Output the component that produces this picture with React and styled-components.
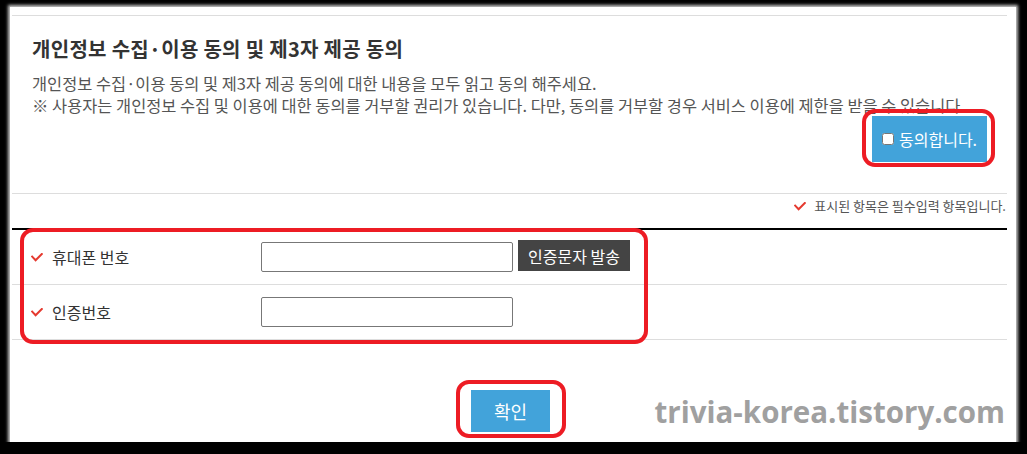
import React, { useState } from "react";
import styled, { createGlobalStyle } from "styled-components";

const GlobalStyle = createGlobalStyle`
  html, body {
    margin: 0;
    background: #000;
  }
  body {
    font-family: "Noto Sans CJK KR", "Noto Sans", sans-serif;
    color: #333;
  }
`;

function CheckMark({ size = 12 }) {
  return (
    <svg width={size} height={size * 0.75} viewBox="0 0 12 9" fill="none">
      <polyline
        points="1.2,3.6 4.6,7.2 10.8,1"
        stroke="#e5392f"
        strokeWidth="2"
        strokeLinecap="square"
      />
    </svg>
  );
}

function App() {
  const [agree, setAgree] = useState(false);
  const [phone, setPhone] = useState("");
  const [code, setCode] = useState("");

  return (
    <>
      <GlobalStyle />
      <Panel>
        <Agreement>
          <Title>개인정보 수집·이용 동의 및 제3자 제공 동의</Title>
          <Desc>
            개인정보 수집·이용 동의 및 제3자 제공 동의에 대한 내용을 모두 읽고 동의 해주세요.
            <br />※ 사용자는 개인정보 수집 및 이용에 대한 동의를 거부할 권리가 있습니다. 다만, 동의를 거부할 경우 서비스 이용에 제한을 받을 수 있습니다.
          </Desc>
          <AgreeRow>
            <Highlight inset="-7px -8px -5px -10px">
              <AgreeButton>
                <input
                  type="checkbox"
                  checked={agree}
                  onChange={e => setAgree(e.target.checked)}
                />
                동의합니다.
              </AgreeButton>
            </Highlight>
          </AgreeRow>
        </Agreement>

        <Note>
          <CheckMark />
          표시된 항목은 필수입력 항목입니다.
        </Note>

        <Form>
          <FormFrame />
          <Row>
            <Label>
              <CheckMark />
              휴대폰 번호
            </Label>
            <Input value={phone} onChange={e => setPhone(e.target.value)} />
            <SendButton type="button">인증문자 발송</SendButton>
          </Row>
          <Row>
            <Label>
              <CheckMark />
              인증번호
            </Label>
            <Input value={code} onChange={e => setCode(e.target.value)} />
          </Row>
        </Form>

        <Footer>
          <Highlight inset="-10px -16px -6px -15px">
            <ConfirmButton type="button">확인</ConfirmButton>
          </Highlight>
        </Footer>

        <Watermark>trivia-korea.tistory.com</Watermark>
      </Panel>
    </>
  );
}

const Panel = styled.div`
  position: relative;
  box-sizing: border-box;
  width: 1006px;
  height: 435px;
  margin: 7px 0 0 10px;
  padding: 8px 9px 0 2px;
  background: #fff;
  box-shadow: 0 0 3px 2px #c8c8c8;
`;

const Agreement = styled.section`
  border-top: 1px solid #ddd;
  border-bottom: 1px solid #ddd;
  padding: 19px 20px 31px 20px;
`;

const Title = styled.h2`
  margin: 0;
  font-size: 20px;
  line-height: 28px;
  font-weight: 700;
  letter-spacing: 0.3px;
  color: #333;
`;

const Desc = styled.p`
  margin: 9px 0 0;
  font-size: 16.4px;
  line-height: 22px;
  color: #555;
`;

const AgreeRow = styled.div`
  display: flex;
  justify-content: flex-end;
`;

const Highlight = styled.span`
  position: relative;
  display: inline-block;
  &::after {
    content: "";
    position: absolute;
    inset: ${({ inset }) => inset};
    border: 4px solid #ed1c24;
    border-radius: 13px;
    pointer-events: none;
  }
`;

const AgreeButton = styled.label`
  display: flex;
  align-items: center;
  gap: 5px;
  box-sizing: border-box;
  width: 115px;
  height: 46px;
  padding-left: 10px;
  background: #42a3da;
  color: #fff;
  font-size: 16px;
  cursor: pointer;
  input {
    margin: 0;
    width: 12px;
    height: 12px;
  }
`;

const Note = styled.div`
  display: flex;
  justify-content: flex-end;
  align-items: flex-start;
  gap: 8px;
  height: 34px;
  padding: 3px 1px 0 0;
  box-sizing: border-box;
  font-size: 13px;
  line-height: 18px;
  color: #555;
  svg {
    margin-top: 5px;
  }
`;

const Form = styled.div`
  position: relative;
  border-top: 2px solid #000;
`;

const FormFrame = styled.div`
  position: absolute;
  left: 8px;
  top: -2px;
  width: 628px;
  height: 116px;
  box-sizing: border-box;
  border: 4px solid #ed1c24;
  border-radius: 13px;
  pointer-events: none;
`;

const Row = styled.div`
  display: flex;
  align-items: center;
  height: 54px;
  border-bottom: 1px solid #ddd;
`;

const Label = styled.div`
  display: flex;
  align-items: center;
  gap: 9px;
  box-sizing: border-box;
  width: 249px;
  padding-left: 19px;
  font-size: 16px;
  color: #333;
`;

const Input = styled.input`
  box-sizing: border-box;
  width: 252px;
  height: 30px;
  margin: 0;
  border: 1px solid #777;
  border-radius: 2px;
  font-size: 14px;
  padding: 0 6px;
`;

const SendButton = styled.button`
  height: 31px;
  margin: -3px 0 0 5px;
  padding: 0 10px;
  border: none;
  background: #444;
  color: #fff;
  font-family: inherit;
  font-size: 16px;
`;

const Footer = styled.div`
  display: flex;
  justify-content: center;
  padding: 50px 0 0 2px;
`;

const ConfirmButton = styled.button`
  display: block;
  width: 79px;
  height: 42px;
  border: none;
  background: #42a3da;
  color: #fff;
  font-family: inherit;
  font-size: 18px;
`;

const Watermark = styled.div`
  position: absolute;
  right: 11px;
  bottom: 12px;
  font-family: "Open Sans", sans-serif;
  font-weight: 700;
  font-size: 29.5px;
  line-height: 36px;
  color: #a0a0a0;
`;

export default App;
